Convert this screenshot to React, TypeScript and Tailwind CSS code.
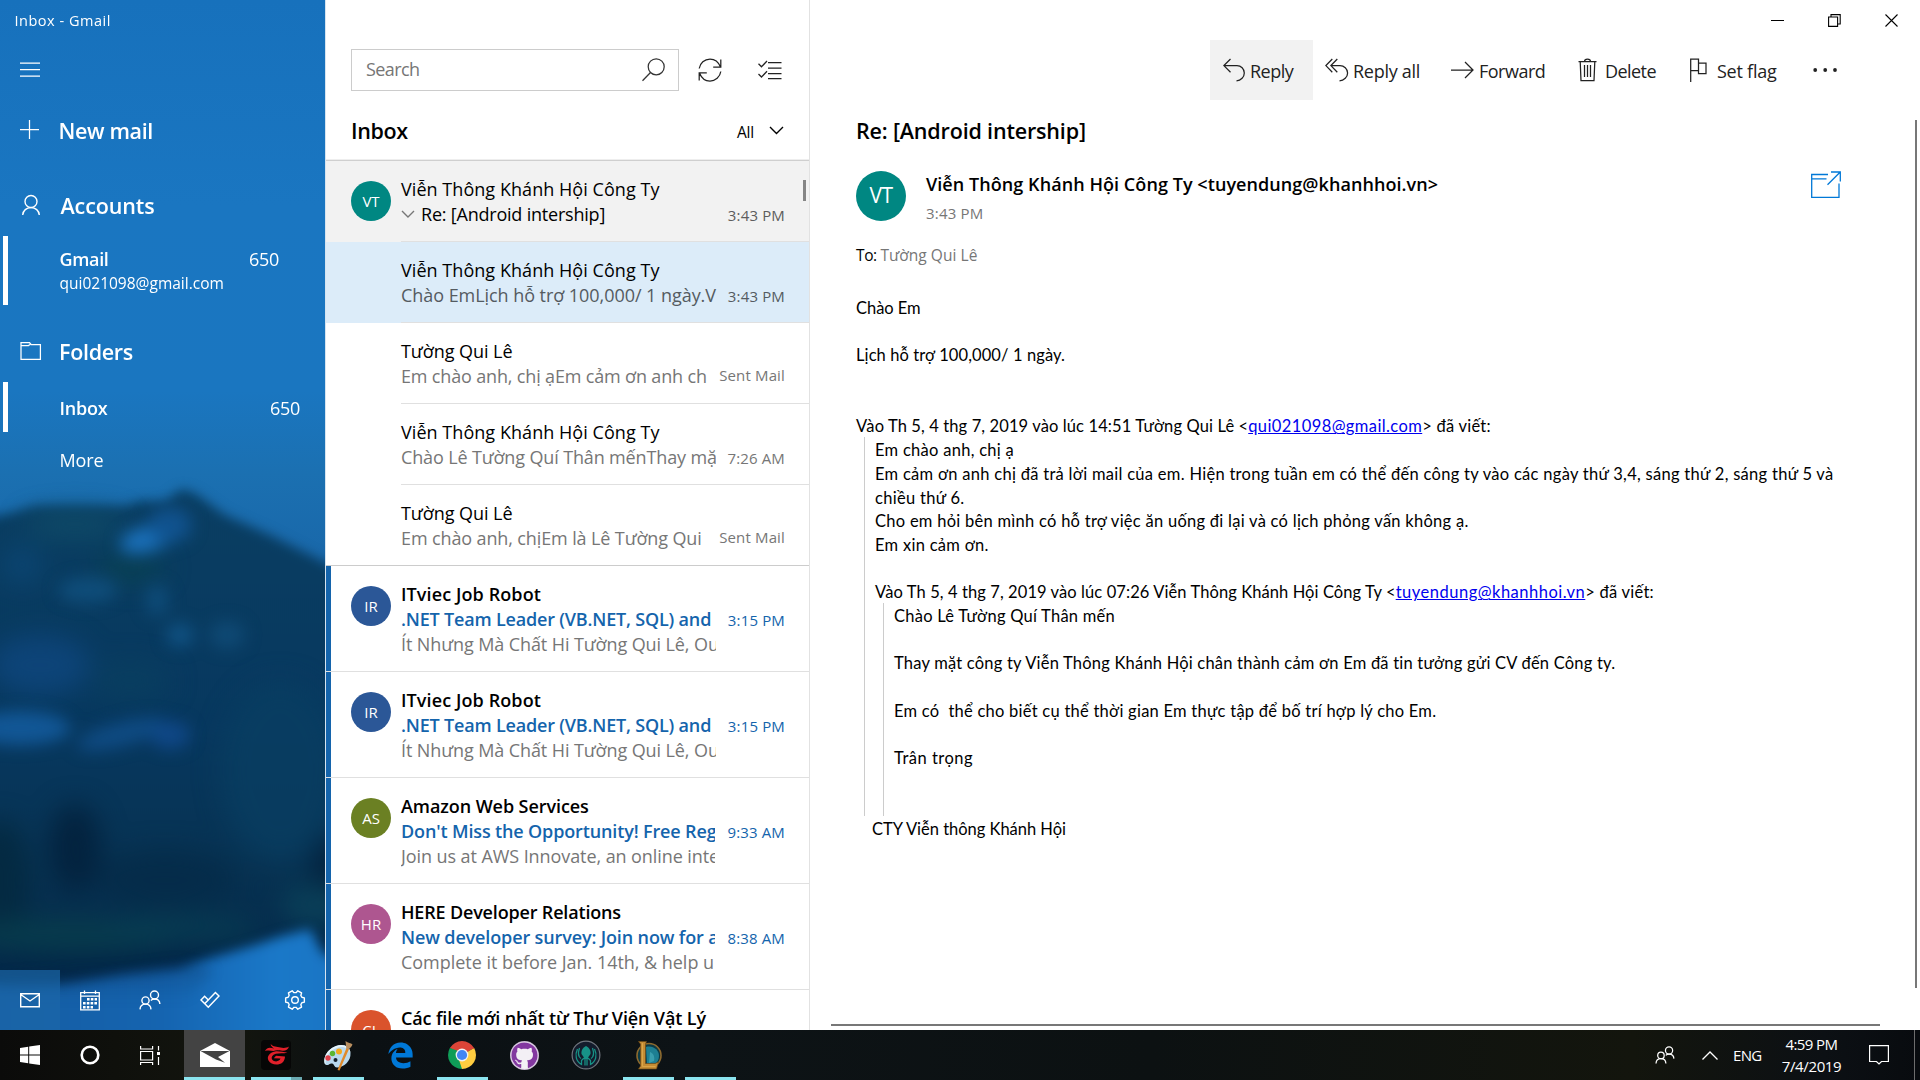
import React from 'react';
import { FaEdgeLegacy, FaGithub } from 'react-icons/fa';

type SvgProps = { w: number; h: number; className?: string; sw?: number; children: React.ReactNode };

function Svg({ w, h, className = '', sw = 1.25, children }: SvgProps) {
  return (
    <svg
      width={w}
      height={h}
      viewBox={`0 0 ${w} ${h}`}
      fill="none"
      stroke="currentColor"
      strokeWidth={sw}
      className={`block shrink-0 ${className}`}
    >
      {children}
    </svg>
  );
}

const gearPath = (() => {
  const pts: string[] = [];
  for (let i = 0; i < 6; i++) {
    const steps: [number, number][] = [
      [-13, 9.6],
      [13, 9.6],
      [22, 7.4],
      [38, 7.4],
    ];
    for (const [a, r] of steps) {
      const t = ((i * 60 + a) * Math.PI) / 180;
      pts.push(`${(11 + r * Math.cos(t)).toFixed(2)} ${(11 + r * Math.sin(t)).toFixed(2)}`);
    }
  }
  return `M${pts.join('L')}Z`;
})();

const People = ({ className = '' }: { className?: string }) => (
  <Svg w={22} h={20} sw={1.4} className={className}>
    <circle cx="15.5" cy="5" r="4" />
    <path d="M11.8 10.4c1-.9 2.3-1.4 3.7-1.4 3 0 5.2 2 5.4 5" />
    <circle cx="6.5" cy="10.5" r="3.6" />
    <path d="M1 19.4c.2-3.2 2.5-5.3 5.5-5.3s5.300 2.100 5.500 5.300" />
  </Svg>
);

/* ---------- Sidebar ---------- */

function Scenery() {
  return (
    <svg width="325" height="1030" viewBox="0 0 325 1030" className="absolute inset-0" preserveAspectRatio="none">
      <defs>
        <linearGradient id="sky" x1="0" y1="0" x2="0" y2="1">
          <stop offset="0" stopColor="#1771bc" />
          <stop offset="0.2" stopColor="#1a76c1" />
          <stop offset="0.38" stopColor="#1a76c0" />
          <stop offset="0.46" stopColor="#1b70b1" />
          <stop offset="0.55" stopColor="#1967a9" />
        </linearGradient>
        <linearGradient id="rock" x1="0" y1="490" x2="0" y2="965" gradientUnits="userSpaceOnUse">
          <stop offset="0" stopColor="#0a3e62" />
          <stop offset="0.5" stopColor="#07385f" />
          <stop offset="0.8" stopColor="#073252" />
          <stop offset="1" stopColor="#04294a" />
        </linearGradient>
        <linearGradient id="lake" x1="0" y1="0" x2="325" y2="0" gradientUnits="userSpaceOnUse">
          <stop offset="0" stopColor="#155da3" />
          <stop offset="0.5" stopColor="#1564b0" />
          <stop offset="0.85" stopColor="#1a78c8" />
          <stop offset="1" stopColor="#1a76c5" />
        </linearGradient>
        <linearGradient id="shore" x1="0" y1="935" x2="0" y2="1030" gradientUnits="userSpaceOnUse">
          <stop offset="0" stopColor="#05294f" stopOpacity="0.5" />
          <stop offset="0.7" stopColor="#05294f" stopOpacity="0" />
        </linearGradient>
        <filter id="soft" x="-20%" y="-20%" width="140%" height="140%" colorInterpolationFilters="sRGB">
          <feGaussianBlur stdDeviation="6" />
        </filter>
        <filter id="haze" x="-60%" y="-60%" width="220%" height="220%" colorInterpolationFilters="sRGB">
          <feGaussianBlur stdDeviation="13" />
        </filter>
        <filter id="glow" x="-60%" y="-60%" width="220%" height="220%" colorInterpolationFilters="sRGB">
          <feGaussianBlur stdDeviation="8" />
        </filter>
      </defs>
      <rect width="325" height="1030" fill="url(#sky)" />
      <path
        d="M-30 522L10 513L35 506L125 506L140 501L165 501L182 489L196 494L225 515L270 535L300 550L360 580V1060H-30Z"
        fill="url(#rock)"
        filter="url(#soft)"
      />
      <g filter="url(#haze)">
        <ellipse cx="75" cy="524" rx="50" ry="12" fill="#0f4b68" />
        <ellipse cx="130" cy="568" rx="34" ry="14" fill="#0a4154" />
        <ellipse cx="22" cy="565" rx="20" ry="18" fill="#0b4572" />
        <ellipse cx="40" cy="665" rx="50" ry="30" fill="#0d4478" />
        <ellipse cx="130" cy="680" rx="40" ry="18" fill="#093e60" />
        <ellipse cx="280" cy="770" rx="60" ry="90" fill="#093e63" opacity="0.7" />
        <ellipse cx="75" cy="848" rx="26" ry="44" fill="#03233f" />
        <ellipse cx="0" cy="880" rx="30" ry="60" fill="#042a42" />
        <ellipse cx="165" cy="880" rx="70" ry="30" fill="#052c4a" />
        <ellipse cx="330" cy="870" rx="18" ry="34" fill="#03233f" />
        <ellipse cx="70" cy="935" rx="110" ry="17" fill="#083d4d" opacity="0.9" />
        <ellipse cx="180" cy="928" rx="80" ry="14" fill="#083d52" opacity="0.8" />
        <ellipse cx="315" cy="905" rx="34" ry="20" fill="#0a3f58" />
        <ellipse cx="110" cy="966" rx="150" ry="14" fill="#032748" />
      </g>
      <g filter="url(#glow)">
        <ellipse cx="147" cy="539" rx="28" ry="13" fill="#1a6fb8" transform="rotate(-15 147 539)" />
        <ellipse cx="170" cy="525" rx="22" ry="18" fill="#115390" opacity="0.9" />
        <ellipse cx="88" cy="590" rx="30" ry="13" fill="#104f7c" opacity="0.9" />
        <ellipse cx="157" cy="600" rx="12" ry="16" fill="#0f4f7d" opacity="0.8" />
        <ellipse cx="180" cy="635" rx="14" ry="12" fill="#12568a" opacity="0.8" />
        <ellipse cx="227" cy="635" rx="18" ry="14" fill="#0f4a76" opacity="0.9" />
        <ellipse cx="20" cy="728" rx="50" ry="17" fill="#135a9b" opacity="0.9" />
        <ellipse cx="122" cy="734" rx="46" ry="12" fill="#104d86" transform="rotate(-15 122 734)" opacity="0.9" />
        <ellipse cx="170" cy="735" rx="20" ry="14" fill="#10488a" opacity="0.9" />
      </g>
      <path
        d="M-30 985L60 984L125 974L180 968L210 958L255 945L282 936L310 929L322 952L360 975V1070H-30Z"
        fill="url(#lake)"
        filter="url(#soft)"
      />
      <path d="M0 975L125 968L180 962L215 970L160 1030H0Z" fill="url(#shore)" filter="url(#soft)" />
    </svg>
  );
}

function Sidebar() {
  return (
    <aside className="relative w-[326px] h-full shrink-0 overflow-hidden border-r border-[#d6e4f0] text-white">
      <Scenery />
      <div className="relative flex h-full flex-col">
        <div className="h-10 pl-[14.500px] text-[14.500px] leading-[41px] tracking-[0.52px]">Inbox - Gmail</div>
        <div className="flex h-[60px] items-center pl-5">
          <Svg w={20} h={17} sw={1.25}>
            <path d="M0 1H20M0 7.500H20M0 14H20" />
          </Svg>
        </div>
        <div className="flex h-[60px] items-center pl-5">
          <Svg w={38.5} h={20} sw={1.25}>
            <path d="M0 9.500H19M9.500 0V19" />
          </Svg>
          <span className="pt-0.5 text-[21.500px] font-semibold tracking-[-0.35px]">New mail</span>
        </div>
        <div className="mt-[15px] flex h-[60px] items-center pl-[22px]">
          <Svg w={38.5} h={22} sw={1.4}>
            <circle cx="9" cy="7.500" r="6" />
            <path d="M0.700 21C1 16.500 4.500 13.600 9 13.600S17 16.500 17.300 21" />
          </Svg>
          <span className="pt-0.5 text-[21.500px] font-semibold tracking-[-0.12px]">Accounts</span>
        </div>
        <div className="mt-px flex h-[69px]">
          <div className="ml-[3px] w-[5px] bg-white" />
          <div className="flex-1 pt-[11px] pl-[51.500px]">
            <div className="flex h-6 items-center justify-between pr-[46px] text-[18px]">
              <span className="font-semibold tracking-[-0.34px]">Gmail</span>
              <span className="tracking-[-0.29px]">650</span>
            </div>
            <div className="h-6 text-[15.500px] leading-6">qui021098@gmail.com</div>
          </div>
        </div>
        <div className="mt-4 flex h-[60px] items-center pl-5">
          <Svg w={39} h={20} sw={1.25}>
            <path d="M1 1.600H9.500L11 3.500H20.400V18.400H1ZM1 4.500H8.500L10 3.500" />
          </Svg>
          <span className="pt-0.5 text-[21.500px] font-semibold tracking-[-0.3px]">Folders</span>
        </div>
        <div className="mt-px flex h-[50px]">
          <div className="ml-[3px] w-[5px] bg-white" />
          <div className="flex flex-1 items-center justify-between pl-[51.500px] pr-[25px] pt-0.5 text-[18px]">
            <span className="font-semibold tracking-[-0.2px]">Inbox</span>
            <span className="tracking-[-0.29px]">650</span>
          </div>
        </div>
        <div className="flex h-[54px] items-center pl-[59.500px] pt-0.5 text-[18px] tracking-[-0.1px]">More</div>
        <nav className="mt-auto flex h-[60px] items-center">
          <div className="flex h-[60px] w-[60px] items-center justify-center bg-[#1b66a8]/70">
            <Svg w={20} h={15} sw={1.4}>
              <path d="M0.700 0.700H19.300V13.800H0.700ZM0.700 1.500L10 8L19.300 1.500" />
            </Svg>
          </div>
          <div className="flex w-[60px] justify-center">
            <Svg w={20} h={21} sw={1.3}>
              <path d="M0.700 2.700H19.300V19.800H0.700ZM0.700 6.200H19.300M4.500 0.500V4M15.500 0.500V4" />
              <path d="M7 9.300H17M3 13.300H17M3 17.300H13" strokeWidth="2.600" strokeDasharray="2.600 1.200" />
            </Svg>
          </div>
          <div className="flex w-[60px] justify-center">
            <People />
          </div>
          <div className="flex w-[60px] justify-center">
            <Svg w={20} h={18} sw={1.5}>
              <path d="M8.300 16.200L1 9L4.600 5.300L8.300 9L15.400 1.500L19 5L8.300 16.200ZM8.300 9L4.800 12.600" />
            </Svg>
          </div>
          <div className="ml-auto flex w-[60px] justify-center">
            <Svg w={22} h={22} sw={1.4}>
              <path d={gearPath} strokeLinejoin="round" />
              <circle cx="11" cy="11" r="3.300" />
            </Svg>
          </div>
        </nav>
      </div>
    </aside>
  );
}

/* ---------- Message list ---------- */

type Item = {
  name: string;
  nameCls: string;
  subject?: string;
  subjectCls?: string;
  preview: string;
  previewCls: string;
  time: string;
  initials: string;
  color: string;
};

const thread: { name: string; nameCls: string; preview: string; previewCls: string; time: string; row: string }[] = [
  {
    name: 'Viễn Thông Khánh Hội Công Ty',
    nameCls: 'tracking-[0.05px]',
    preview: 'Chào EmLịch hỗ trợ 100,000/ 1 ngày.V',
    previewCls: 'tracking-[-0.05px]',
    time: '3:43 PM',
    row: 'bg-[#dcecf9] text-[#545b61]',
  },
  {
    name: 'Tường Qui Lê',
    nameCls: 'tracking-[-0.05px]',
    preview: 'Em chào anh, chị ạEm cảm ơn anh ch',
    previewCls: 'tracking-[-0.16px]',
    time: 'Sent Mail',
    row: 'text-[#767676]',
  },
  {
    name: 'Viễn Thông Khánh Hội Công Ty',
    nameCls: 'tracking-[0.05px]',
    preview: 'Chào Lê Tường Quí Thân mếnThay mặ',
    previewCls: 'tracking-[-0.14px]',
    time: '7:26 AM',
    row: 'text-[#767676]',
  },
  {
    name: 'Tường Qui Lê',
    nameCls: 'tracking-[-0.05px]',
    preview: 'Em chào anh, chịEm là Lê Tường Qui',
    previewCls: 'tracking-[-0.12px]',
    time: 'Sent Mail',
    row: 'text-[#767676]',
  },
];

const items: Item[] = [
  {
    name: 'ITviec Job Robot',
    nameCls: 'tracking-[0.1px]',
    subject: '.NET Team Leader (VB.NET, SQL) and',
    subjectCls: 'tracking-[-0.18px]',
    preview: 'Ít Nhưng Mà Chất Hi Tường Qui Lê, Ou',
    previewCls: 'tracking-[-0.1px]',
    time: '3:15 PM',
    initials: 'IR',
    color: 'bg-[#2b5797]',
  },
  {
    name: 'ITviec Job Robot',
    nameCls: 'tracking-[0.1px]',
    subject: '.NET Team Leader (VB.NET, SQL) and',
    subjectCls: 'tracking-[-0.18px]',
    preview: 'Ít Nhưng Mà Chất Hi Tường Qui Lê, Ou',
    previewCls: 'tracking-[-0.1px]',
    time: '3:15 PM',
    initials: 'IR',
    color: 'bg-[#2b5797]',
  },
  {
    name: 'Amazon Web Services',
    nameCls: 'tracking-[-0.08px]',
    subject: "Don't Miss the Opportunity! Free Reg",
    subjectCls: 'tracking-[-0.14px]',
    preview: 'Join us at AWS Innovate, an online inte',
    previewCls: 'tracking-[-0.08px]',
    time: '9:33 AM',
    initials: 'AS',
    color: 'bg-[#6b8023]',
  },
  {
    name: 'HERE Developer Relations',
    nameCls: 'tracking-[-0.17px]',
    subject: 'New developer survey: Join now for a',
    subjectCls: 'tracking-[-0.13px]',
    preview: 'Complete it before Jan. 14th, & help u',
    previewCls: 'tracking-[-0.035px]',
    time: '8:38 AM',
    initials: 'HR',
    color: 'bg-[#ae5690]',
  },
  {
    name: 'Các file mới nhất từ Thư Viện Vật Lý',
    nameCls: 'tracking-[-0.14px]',
    subject: '',
    preview: '',
    previewCls: '',
    time: '',
    initials: 'CL',
    color: 'bg-[#da532c]',
  },
];

function MessageList() {
  return (
    <section className="flex h-full w-[484px] shrink-0 flex-col overflow-hidden border-r border-[#e2e2e2] bg-white text-black">
      <div className="mt-[49px] flex h-[42px] shrink-0 items-center pl-[25px]">
        <div className="flex h-[42px] w-[328px] items-center justify-between border border-[#cccccc] pl-[14px] pr-[13px]">
          <span className="pb-0.5 text-[18px] tracking-[-0.6px] text-[#767676]">Search</span>
          <Svg w={23} h={24} className="text-[#333]">
            <circle cx="14.200" cy="8.800" r="8" />
            <path d="M8.500 14.500L0.500 22.800" />
          </Svg>
        </div>
        <Svg w={24} h={24} className="ml-[18.500px] text-[#222]">
          <path d="M1.200 10.500C2 5 6.500 1 12 1C16.500 1 20.300 3.500 22.400 8.800M22.800 1.500V9.200H15.200" />
          <path d="M22.800 13.500C22 19 17.500 23 12 23C7.500 23 3.700 20.500 1.600 15.200M1.200 22.500V14.800H8.800" />
        </Svg>
        <Svg w={24} h={20} className="ml-[36px] text-[#222]">
          <path d="M10 2.500H23.500M10 8H23.500M10 13.500H23.500M10 18.500H23.500" />
          <path d="M0.500 3.800L3.500 6.800L9 1M0.500 14L3.500 17L9 11.300" />
        </Svg>
      </div>
      <div className="flex h-[68px] shrink-0 items-center justify-between pl-[25px] pr-[25px] pt-[12px]">
        <h2 className="text-[21.500px] font-semibold tracking-[-0.4px]">Inbox</h2>
        <div className="flex items-center pt-[3px] text-[15.500px] tracking-[-0.2px]">
          All
          <Svg w={15} h={9} className="ml-[15px] mb-1" sw={1.4}>
            <path d="M1 1L7.500 7.500L14 1" />
          </Svg>
        </div>
      </div>
      <div className="h-0.5 shrink-0 border-b border-[#cfcfcf] bg-[#eeeeee]" />

      <div className="relative flex h-[81px] shrink-0 bg-[#f2f2f2] pl-[25px]">
        <div className="mt-5 flex h-10 w-10 shrink-0 items-center justify-center rounded-full bg-[#008782] text-[15px] text-white">
          VT
        </div>
        <div className="ml-[10px] flex-1 border-b border-[#e0e0e0] pr-[24px] pt-[16px] leading-[25px] whitespace-nowrap">
          <div className="text-[18px] tracking-[0.05px]">Viễn Thông Khánh Hội Công Ty</div>
          <div className="flex h-[25px] justify-between">
            <span className="flex h-[25px] items-center text-[18px] tracking-[-0.21px]">
              <Svg w={20} h={9} className="-mt-px text-[#777]" sw={1.4}>
                <path d="M1 1L7 7L13 1" />
              </Svg>
              Re: [Android intership]
            </span>
            <span className="text-[15px] leading-[27px] tracking-[0.15px] text-[#5d5d5d]">3:43 PM</span>
          </div>
        </div>
        <div className="absolute right-[3px] top-[19px] h-[21px] w-[3px] bg-[#858585]" />
      </div>

      {thread.map((t, i) => (
        <div key={i} className={`flex h-[81px] shrink-0 ${t.row} ${i === 3 ? 'border-b border-[#cccccc]' : ''}`}>
          <div
            className={`ml-[75px] flex-1 min-w-0 pr-[24px] pt-[16px] leading-[25px] whitespace-nowrap ${
              i === 3 ? '' : 'border-b border-[#e0e0e0]'
            }`}
          >
            <div className={`text-[18px] text-black ${t.nameCls}`}>{t.name}</div>
            <div className="flex h-[25px] gap-[11px]">
              <span className={`min-w-0 flex-1 overflow-hidden text-[18px] ${t.previewCls}`}>{t.preview}</span>
              <span
                className={`text-[15px] tracking-[0.15px] ${t.time === 'Sent Mail' ? 'leading-[23px]' : 'leading-[27px]'}`}
              >
                {t.time}
              </span>
            </div>
          </div>
        </div>
      ))}

      {items.map((m, i) => (
        <div key={i} className="flex h-[106px] shrink-0 border-b border-[#e0e0e0]">
          <div className="w-[5px] bg-[#1464ac]" />
          <div
            className={`ml-5 mt-5 flex h-10 w-10 shrink-0 items-center justify-center rounded-full text-[15px] text-white ${m.color}`}
          >
            {m.initials}
          </div>
          <div className="ml-[10px] min-w-0 flex-1 pr-[24px] pt-[16px] leading-[25px] whitespace-nowrap">
            <div className={`text-[18px] font-semibold ${m.nameCls}`}>{m.name}</div>
            <div className="flex gap-[12px]">
              <div className="min-w-0 flex-1 overflow-hidden text-[18px]">
                <div className={`font-semibold text-[#1464ac] ${m.subjectCls ?? ''}`}>{m.subject}</div>
                <div className={`text-[#767676] ${m.previewCls}`}>{m.preview}</div>
              </div>
              <span className="text-[15px] leading-[27px] tracking-[0.15px] text-[#1464ac]">{m.time}</span>
            </div>
          </div>
        </div>
      ))}
    </section>
  );
}

/* ---------- Reading pane ---------- */

function Toolbar() {
  return (
    <div className="flex h-[60px] justify-end pr-[63px] text-[18px] text-[#222]">
      <div className="flex w-[103px] items-center bg-[#f2f2f2] pl-[13px]">
        <Svg w={27} h={24}>
          <path d="M7.500 1L0.900 7.600L7.500 14.200M1 7.600H14C18 7.600 21.300 10.800 21.300 15C21.300 19 18 22.500 13.500 22.800" />
        </Svg>
        <span className="pt-0.5 tracking-[-0.5px]">Reply</span>
      </div>
      <div className="flex w-[126px] items-center pl-[12px]">
        <Svg w={28} h={24}>
          <path d="M7.300 1L0.900 7.600L7.300 14.200M12.300 1L5.900 7.600L12.300 14.200M6 7.600H15C19 7.600 22.600 10.800 22.600 15C22.600 19 19 22.500 14.500 22.800" />
        </Svg>
        <span className="pt-0.5 tracking-[-0.28px]">Reply all</span>
      </div>
      <div className="flex w-[126px] items-center pl-[12px]">
        <Svg w={28} h={24}>
          <path d="M0 12H22M14 4L22 12L14 20" />
        </Svg>
        <span className="pt-0.5 tracking-[-0.5px]">Forward</span>
      </div>
      <div className="flex w-[112px] items-center pl-[13px]">
        <Svg w={27} h={24}>
          <path d="M0.500 3.500H18.500M6.500 3.500C6.500 1.500 7.500 1 9.500 1S12.500 1.500 12.500 3.500M2.200 3.500L3 22.500H16L16.800 3.500M6.500 7V19M9.500 7V19M12.500 7V19" />
        </Svg>
        <span className="pt-0.5 tracking-[-0.55px]">Delete</span>
      </div>
      <div className="flex w-[115px] items-center pl-[13px]">
        <Svg w={27} h={24}>
          <path d="M0.700 24V1.200H8.500V12.500H0.700M8.500 5H16V15.500H8.500V12" />
        </Svg>
        <span className="pt-0.5 tracking-[-0.25px]">Set flag</span>
      </div>
      <div className="flex w-[65px] items-center justify-center">
        <Svg w={24} h={6}>
          <g fill="currentColor" stroke="none">
            <circle cx="2.200" cy="3" r="1.900" />
            <circle cx="12.200" cy="3" r="1.900" />
            <circle cx="22" cy="3" r="1.900" />
          </g>
        </Svg>
      </div>
    </div>
  );
}

const Line = ({ children, className = '' }: { children?: React.ReactNode; className?: string }) => (
  <div className={`h-[23.700px] whitespace-pre ${className}`}>{children}</div>
);

function Body() {
  return (
    <div className="font-['Lato','Open_Sans',sans-serif] text-[16.500px] leading-[26px]">
      <Line className="tracking-[-0.05px]">Chào Em</Line>
      <Line />
      <Line className="tracking-[0.1px]">Lịch hỗ trợ 100,000/ 1 ngày.</Line>
      <Line />
      <Line />
      <Line>
        <span className="tracking-[0.115px]">Vào Th 5, 4 thg 7, 2019 vào lúc 14:51 Tường Qui Lê &lt;</span>
        <span className="tracking-[0.4px] text-[#0000ee] underline">qui021098@gmail.com</span>
        <span className="tracking-[0.24px]">&gt; đã viết:</span>
      </Line>
      <div className="ml-2 border-l border-[#cccccc] pl-[10px]">
        <Line className="tracking-[0.28px]">Em chào anh, chị ạ</Line>
        <Line className="tracking-[0.285px]">
          Em cảm ơn anh chị đã trả lời mail của em. Hiện trong tuần em có thể đến công ty vào các ngày thứ 3,4, sáng thứ
          2, sáng thứ 5 và
        </Line>
        <Line className="tracking-[0.3px]">chiều thứ 6.</Line>
        <Line className="tracking-[0.27px]">
          Cho em hỏi bên mình có hỗ trợ việc ăn uống đi lại và có lịch phỏng vấn không ạ.
        </Line>
        <Line className="tracking-[0.28px]">Em xin cảm ơn.</Line>
        <Line />
        <Line>
          <span className="tracking-[0.09px]">Vào Th 5, 4 thg 7, 2019 vào lúc 07:26 Viễn Thông Khánh Hội Công Ty &lt;</span>
          <span className="tracking-[0.5px] text-[#0000ee] underline">tuyendung@khanhhoi.vn</span>
          <span className="tracking-[0.24px]">&gt; đã viết:</span>
        </Line>
        <div className="ml-2 border-l border-[#cccccc] pl-[10px]">
          <Line className="tracking-[0.24px]">Chào Lê Tường Quí Thân mến</Line>
          <Line />
          <Line className="tracking-[0.207px]">
            Thay mặt công ty Viễn Thông Khánh Hội chân thành cảm ơn Em đã tin tưởng gửi CV đến Công ty.
          </Line>
          <Line />
          <Line className="tracking-[0.25px]">
            {'Em có  thể cho biết cụ thể thời gian Em thực tập để bố trí hợp lý cho Em.'}
          </Line>
          <Line />
          <Line className="tracking-[0.5px]">Trân trọng</Line>
          <Line />
          <Line />
        </div>
      </div>
      <Line className="pl-[16px] tracking-[-0.02px]">CTY Viễn thông Khánh Hội</Line>
    </div>
  );
}

function ReadingPane() {
  return (
    <main className="relative flex h-full flex-1 flex-col bg-white text-black">
      <div className="flex h-10 items-center justify-end pr-[22px]">
        <Svg w={13} h={13} sw={1}>
          <path d="M0 6.500H13" />
        </Svg>
        <Svg w={13} h={13} sw={1.1} className="ml-[44px]">
          <path d="M0.600 3H9.600V12.400H0.600ZM3 3V0.600H12.200V10H9.600" />
        </Svg>
        <Svg w={13} h={13} sw={1.1} className="ml-[44px]">
          <path d="M0.500 0.500L12.500 12.500M12.500 0.500L0.500 12.500" />
        </Svg>
      </div>
      <Toolbar />
      <div className="flex flex-1 flex-col pl-[46px]">
        <h1 className="h-[71px] text-[21.500px] font-semibold leading-[62px] tracking-[-0.17px]">
          Re: [Android intership]
        </h1>
        <div className="flex h-[72px]">
          <div className="flex h-[50px] w-[50px] items-center justify-center rounded-full bg-[#008782] text-[21px] tracking-[-0.5px] text-white">
            VT
          </div>
          <div className="-mt-px ml-5 flex-1">
            <div className="h-[29px] text-[18px] font-semibold leading-7 tracking-[0.065px]">
              {'Viễn Thông Khánh Hội Công Ty <tuyendung@khanhhoi.vn>'}
            </div>
            <div className="text-[15px] leading-7 tracking-[0.18px] text-[#767676]">3:43 PM</div>
          </div>
          <Svg w={30} h={28} sw={1.3} className="mr-[79px] text-[#0078d7]">
            <path d="M17 3.500H0.700V26.300H28V12.500M0.700 7.800H15.500M20 1H29.300V10.500M29 1.200L16.500 13.800" />
          </Svg>
        </div>
        <div className="h-[52px] text-[15.500px] leading-6">
          <span className="tracking-[-0.4px]">To: </span>
          <span className="tracking-[0.04px] text-[#767676]">Tường Qui Lê</span>
        </div>
        <Body />
      </div>
      <div className="absolute right-[3px] top-[120px] h-[868px] w-0.5 bg-[#777]" />
      <div className="absolute bottom-1 right-10 h-0.5 w-[1049px] bg-[#777]" />
    </main>
  );
}

/* ---------- Taskbar ---------- */

function AppCell({ children, running = false }: { children?: React.ReactNode; running?: boolean }) {
  return (
    <div className="flex w-[62px] flex-col items-center">
      <div className="flex h-[47px] items-center pt-[3px]">{children}</div>
      {running && <div className="h-[3px] w-[51px] bg-[#8be4ef]" />}
    </div>
  );
}

const Garena = () => (
  <Svg w={30} h={30}>
    <rect width="30" height="30" rx="4" fill="#060606" stroke="none" />
    <g fill="#e0202a" stroke="none">
      <path d="M4 11C6 7 9 7.500 13 8.500C10.500 6.500 9.500 5.500 9.800 4C12 7 16 6.500 19.500 7.500C22.500 8.300 25.500 8 28 6.500C27 10 24.500 11 21.500 10.800C17.500 10.400 15.500 9.800 12.500 11C10 10.600 7 10 4 11Z" />
      <path d="M14 11.500C8.500 12.500 5.500 16.500 7.500 20.500C9.800 25 17.500 26 21.500 22.500C23.300 20.800 24 18.500 24 16.500L15 15.800L12.800 18.200L19.500 18.600C18.500 21.800 13.500 22.300 11.300 19.800C9.800 17.500 11.500 14.800 14.800 13.800C18.500 12.800 22.500 14 26.500 12.500C22.500 12.300 17.500 10.800 14 11.500Z" />
    </g>
  </Svg>
);

const Paint = () => (
  <Svg w={32} h={32}>
    <g stroke="none">
      <path
        d="M14 7C22 4 28 8 28.500 14C29 22 22 28.500 15 28.500C12 28.500 12.500 25 10 24.500C7.500 24 6 27.500 3.500 25.500C1 23 2 11.500 14 7Z"
        fill="#b9d9ee"
      />
      <path
        d="M14 7C22 4 28 8 28.500 14C27 9 21 6.500 14.500 9C7 12 3.500 18 3.500 25.500C1 23 2 11.500 14 7Z"
        fill="#e6f4fb"
      />
      <circle cx="6" cy="19" r="2.700" fill="#e0424a" />
      <circle cx="10.500" cy="14.500" r="2.700" fill="#5cb531" />
      <circle cx="17" cy="12.500" r="3" fill="#f5a81c" />
      <circle cx="13.500" cy="21" r="2" fill="#17212b" />
      <path d="M24.500 9L27 10L17.500 31.500L15.500 31Z" fill="#e08a2b" />
      <path d="M23.500 2C26 4 29 4 30.500 5.500C29.500 8 27.500 9 26.800 10.500L24.300 9.500Z" fill="#b98f60" />
    </g>
  </Svg>
);

const Chrome = () => (
  <Svg w={28} h={28}>
    <g stroke="none">
      <path d="M14 14L1.880 7A14 14 0 0 1 26.120 7Z" fill="#db4437" />
      <path d="M14 14L26.120 7A14 14 0 0 1 14 28Z" fill="#ffcd40" />
      <path d="M14 14L14 28A14 14 0 0 1 1.880 7Z" fill="#0f9d58" />
      <path d="M14 7.600H26.450L26.120 7L14 7Z" fill="#db4437" />
      <path d="M19.540 17.200L14 28L11 19Z" fill="#ffcd40" />
      <path d="M8.460 17.200L1.880 7L9 9.500Z" fill="#0f9d58" />
      <circle cx="14" cy="14" r="6.400" fill="#f1f1f1" />
      <circle cx="14" cy="14" r="5.100" fill="#4285f4" />
    </g>
  </Svg>
);

const Kraken = () => (
  <Svg w={30} h={30}>
    <circle cx="15" cy="15" r="13.900" fill="#141c2c" stroke="#70757d" strokeWidth="1.200" />
    <g fill="#179287" stroke="none">
      <path d="M15 6C18.500 7.500 20 11 19.500 14L17 17.500V19H13V17.500L10.500 14C10 11 11.500 7.500 15 6Z" />
    </g>
    <g stroke="#179287" strokeWidth="1.300">
      <path d="M6.500 9C3.500 15 5 21.500 10.500 24.500V20.500L13 18M23.500 9C26.500 15 25 21.500 19.500 24.500V20.500L17 18M8.500 8C6.500 14 7.500 17 10 18.500M21.500 8C23.500 14 22.500 17 20 18.500M14 18V25.500M16 18V25.500" />
    </g>
  </Svg>
);

const League = () => (
  <Svg w={30} h={30}>
    <circle cx="16" cy="15.500" r="12" fill="#0c3b46" stroke="#8d6a2f" strokeWidth="1.600" />
    <path d="M13 7C20 5 26 10 26 16C26 20 24 23 21 24.500H14Z" fill="#1d7f92" stroke="none" />
    <path d="M17 12C20 13 22 16 21 21L16 23Z" fill="#4db3bf" stroke="none" opacity="0.600" />
    <path d="M5.500 1.500H13.500L12.500 4V23.500H22L25.500 22L23.500 29H5.500L7.500 26V4Z" fill="#c48c34" stroke="#6c4715" strokeWidth="0.700" />
    <path d="M9.500 3V26.500H22.500" stroke="#dba84c" strokeWidth="0.900" />
  </Svg>
);

function Taskbar() {
  return (
    <footer className="flex h-[50px] w-full bg-[linear-gradient(90deg,#0b0b0a_0%,#13150e_12%,#0b1013_19%,#0d1316_36%,#0c1112_60%,#13150d_85%,#0c1014_95%,#080b0f_100%)] text-white">
      <div className="flex w-[60px] items-center justify-center">
        <Svg w={20} h={20}>
          <path d="M0 3L8.200 1.700V9.500H0ZM9.200 1.500L20 0V9.500H9.200ZM0 10.500H8.200V18.300L0 17ZM9.200 10.500H20V20L9.200 18.500Z" fill="#fff" stroke="none" />
        </Svg>
      </div>
      <div className="flex w-[60px] items-center justify-center">
        <Svg w={20} h={20}>
          <circle cx="10" cy="10" r="8.300" strokeWidth="2.600" />
        </Svg>
      </div>
      <div className="flex w-[60px] items-center justify-center">
        <Svg w={20} h={19} sw={1.2}>
          <path d="M0.600 5.500H12.600V14H0.600ZM0.600 0V3H12.600V0M0.600 19V16.500H12.600V19M18.500 0V4.500M18.500 11V19" />
          <rect x="17" y="6" width="3" height="3" fill="#fff" stroke="none" />
        </Svg>
      </div>
      <div className="ml-1 flex w-[61px] flex-col items-center bg-[#434343]">
        <div className="flex h-[47px] items-center pt-0.5">
          <Svg w={30} h={24}>
            <path d="M0 8L15 0L30 8V24H0Z" fill="#fff" stroke="none" />
            <path d="M0.500 8H29.500L18 14L25 19.700L16 16.500Z" fill="#434343" stroke="none" />
          </Svg>
        </div>
        <div className="h-[3px] w-full bg-[#8be4ef]" />
      </div>
      <div className="flex w-[62px] flex-col items-center">
        <div className="flex h-[47px] items-center pt-[3px]">
          <Garena />
        </div>
        <div className="flex h-[3px] w-[51px] bg-[#8be4ef]">
          <div className="ml-auto w-[11px] bg-[#6aa9b0]" />
        </div>
      </div>
      <AppCell running>
        <Paint />
      </AppCell>
      <AppCell>
        <FaEdgeLegacy className="h-[27px] w-[27px] text-[#0078d7]" />
      </AppCell>
      <AppCell running>
        <Chrome />
      </AppCell>
      <AppCell>
        <div className="flex h-[29px] w-[29px] items-center justify-center rounded-full bg-[#cdbdd6]">
          <div className="flex h-[27px] w-[27px] items-center justify-center rounded-full bg-[#f3f0f5]">
            <FaGithub className="h-[27px] w-[27px] text-[#8338a0]" />
          </div>
        </div>
      </AppCell>
      <AppCell>
        <Kraken />
      </AppCell>
      <AppCell running>
        <League />
      </AppCell>
      <AppCell running />
      <div className="ml-auto flex items-center">
        <People className="h-[18px] w-[20px]" />
        <Svg w={16} h={9} sw={1.3} className="ml-[27px]">
          <path d="M0.500 8.500L8 1L15.500 8.500" />
        </Svg>
        <span className="ml-[15px] w-[28px] text-[15px] tracking-[-0.7px]">ENG</span>
        <div className="ml-[17.500px] w-[66px] text-center text-[15px] leading-[22.500px] whitespace-nowrap">
          <div className="tracking-[-0.6px]">4:59 PM</div>
          <div className="tracking-[-0.35px]">7/4/2019</div>
        </div>
        <Svg w={20} h={20} sw={1.2} className="ml-[24.500px]">
          <path d="M0.600 0.600H19.400V16.500H12.500L10 19L7.500 16.500H0.600Z" />
        </Svg>
        <div className="ml-[25px] h-full w-px bg-[#6d6d6d]" />
        <div className="w-[5px]" />
      </div>
    </footer>
  );
}

export default function App() {
  return (
    <div className="flex h-[1080px] w-[1920px] flex-col overflow-hidden font-['Open_Sans','Noto_Sans',sans-serif]">
      <div className="flex h-[1030px] overflow-hidden">
        <Sidebar />
        <MessageList />
        <ReadingPane />
      </div>
      <Taskbar />
    </div>
  );
}
